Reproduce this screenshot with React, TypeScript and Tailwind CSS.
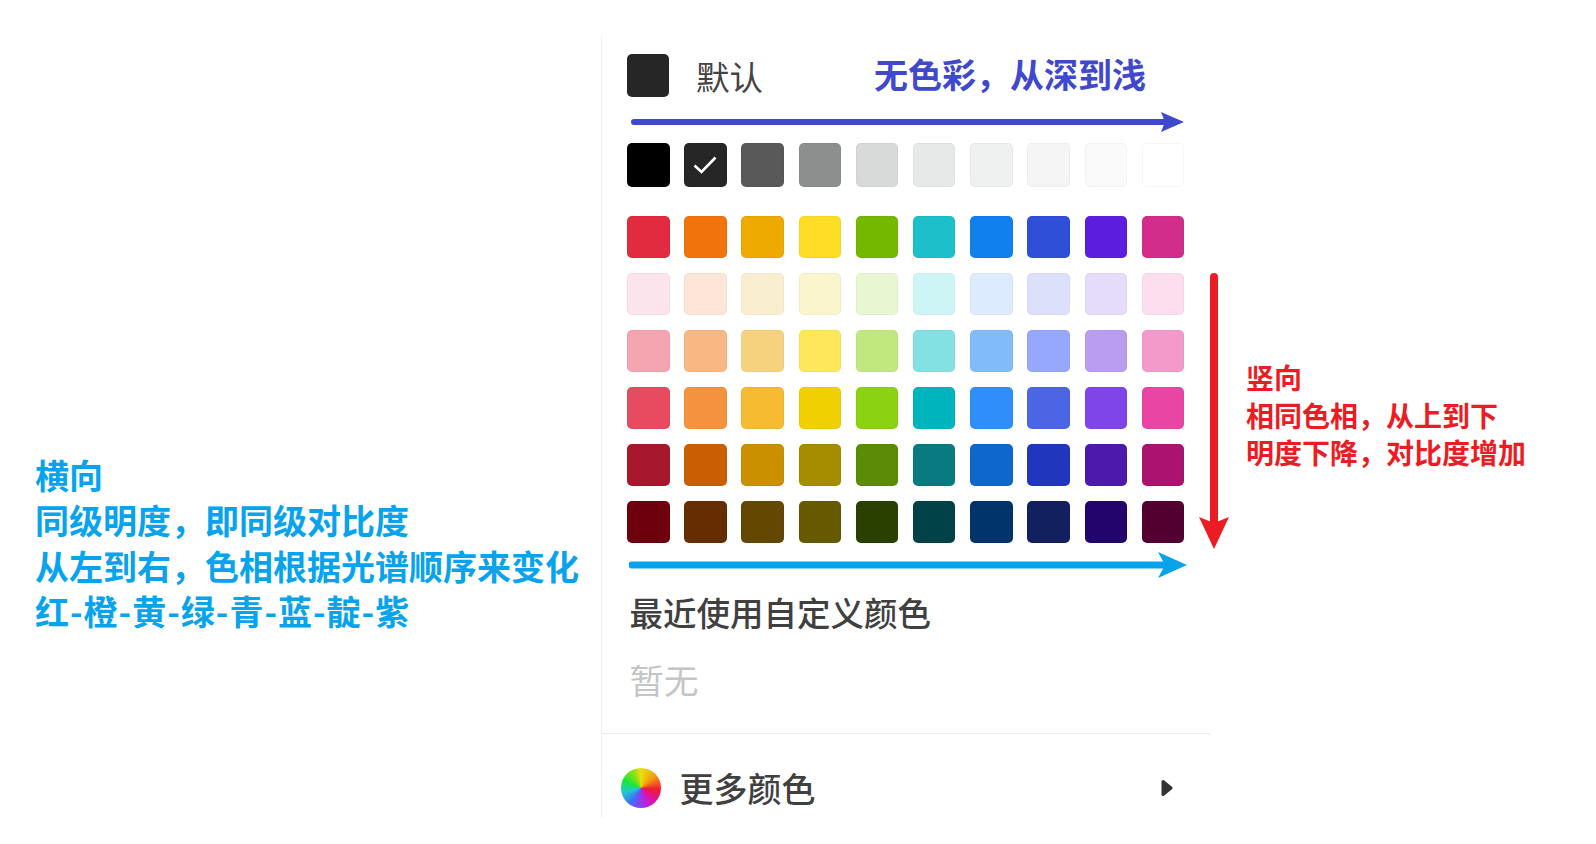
const GRAYS = ["#000000", "#262626", "#595959", "#8c8f8e", "#d8d9d9", "#e7e8e8", "#eff0f0", "#f5f5f5", "#fafafa", "#ffffff"];

const COLOR_ROWS = [
  ["#e22b3f", "#f0730c", "#efaa02", "#fedd26", "#75b800", "#1dbfcb", "#1180ef", "#2f4fd9", "#5c1ddf", "#d32d8c"],
  ["#fbe4eb", "#fde5d7", "#f9efd0", "#fbf5cd", "#e8f7d2", "#cef5f6", "#dcebfd", "#dce0fb", "#e5dcf9", "#fcdeee"],
  ["#f4a5b0", "#f9b783", "#f6d27f", "#fde75a", "#c0e87e", "#83e0e3", "#82bbfa", "#96a7fe", "#ba9cf0", "#f49acb"],
  ["#e84b60", "#f5923e", "#f5bb31", "#f0d000", "#8bd212", "#00b4bd", "#2f8ef9", "#4b65e4", "#7f45e8", "#e945a5"],
  ["#a8182c", "#c95f02", "#ca9000", "#a68d00", "#5a8c05", "#087a80", "#0e67cc", "#2037bd", "#4d18ac", "#ac1270"],
  ["#6e000e", "#642e00", "#644700", "#665a00", "#2a4000", "#004247", "#00346b", "#12205f", "#23046d", "#520032"],
];

const HUES = ["红", "橙", "黄", "绿", "青", "蓝", "靛", "紫"];

const Swatch = ({ color, checked, tall }: { color: string; checked?: boolean; tall?: boolean }) => (
  <div
    className={`flex items-center justify-center rounded-[5px] border border-black/[0.03] ${tall ? "h-[44px]" : "h-[42px]"}`}
    style={{ backgroundColor: color }}
  >
    {checked && (
      <svg width="24" height="18" viewBox="0 0 24 18" fill="none">
        <path d="M1.5 9.5 L8.5 16 L22.5 1.5" stroke="#fff" strokeWidth="2.6" />
      </svg>
    )}
  </div>
);

export default function App() {
  return (
    <div className="relative flex h-[844px] w-[1596px] overflow-hidden bg-white font-['Noto_Sans_CJK_SC',sans-serif]">
      {/* horizontal note */}
      <div className="w-[601px] pl-[35px] pt-[452px] text-[34px] font-bold leading-[45.3px] text-[#07a3ec]">
        <p>横向</p>
        <p>同级明度，即同级对比度</p>
        <p className="whitespace-nowrap">从左到右，色相根据光谱顺序来变化</p>
        <p className="whitespace-nowrap">
          {HUES.map((h, i) => (
            <span key={h}>
              {h}
              {i < HUES.length - 1 && <span className="mx-px">-</span>}
            </span>
          ))}
        </p>
      </div>

      {/* color panel */}
      <div className="mt-[37px] h-[781px] w-[609px] border-l border-[#efefef]">
        <div className="pl-[25px]">
          <div className="mt-[17px] flex h-[43px] items-center">
            <div className="h-[43px] w-[42px] rounded-[5px] bg-[#262626]" />
            <span className="ml-[27px] text-[33.5px] leading-[43px] text-[#444444]">默认</span>
            <span className="-mt-[5px] ml-[111px] whitespace-nowrap text-[34px] font-bold leading-[43px] text-[#4048cd]">
              无色彩，从深到浅
            </span>
          </div>

          <svg className="ml-[4px] mt-[15px] block" width="553" height="20" viewBox="0 0 553 20">
            <path d="M3 10 H535" stroke="#4048cd" strokeWidth="6" strokeLinecap="round" />
            <path d="M530 0 L553 10 L530 20 L534 10 Z" fill="#4048cd" />
          </svg>

          <div className="mt-[11px] grid w-[557px] grid-cols-[repeat(10,42.5px)] gap-x-[14.7px]">
            {GRAYS.map((c, i) => (
              <Swatch key={c} color={c} checked={i === 1} tall />
            ))}
          </div>

          <div className="mt-[28.7px] grid w-[557px] grid-cols-[repeat(10,42.5px)] gap-x-[14.7px] gap-y-[15px]">
            {COLOR_ROWS.flat().map((c) => (
              <Swatch key={c} color={c} />
            ))}
          </div>

          <svg className="ml-[2px] mt-[9.7px] block" width="558" height="26" viewBox="0 0 558 26">
            <path d="M3 13 H540" stroke="#07a3ec" strokeWidth="7" strokeLinecap="round" />
            <path d="M529 0 L558 13 L529 26 L536 13 Z" fill="#07a3ec" />
          </svg>

          <p className="ml-[2.5px] mt-[13.5px] text-[33.5px] font-medium leading-[40px] text-[#404040]">最近使用自定义颜色</p>
          <p className="ml-[2.5px] mt-[27.5px] text-[34.5px] leading-[40px] text-[#c4c6c6]">暂无</p>
        </div>

        <div className="mt-[33.5px] h-px bg-[#ececec]" />

        <div className="mt-[34px] flex h-[40px] items-center pl-[18.5px] pr-[37px]">
          <div className="h-10 w-10 rounded-full bg-[conic-gradient(#e8e010_0deg,#f59a10_50deg,#ee1c30_95deg,#e010b0_140deg,#a030f0_175deg,#3f70f5_215deg,#20c8d0_255deg,#18e838_295deg,#90e010_335deg,#e8e010_360deg)]" />
          <span className="ml-[19px] text-[34px] font-medium leading-[40px] text-[#404040]">更多颜色</span>
          <svg className="ml-auto" width="12" height="18" viewBox="0 0 12 18">
            <path d="M2 2.5 L10 9 L2 15.5 Z" fill="#333333" stroke="#333333" strokeWidth="3" strokeLinejoin="round" />
          </svg>
        </div>
      </div>

      {/* vertical note */}
      <div className="flex-1 pl-[36px] pt-[359px] text-[28px] font-bold leading-[37.5px] text-[#ed1c24]">
        <p>竖向</p>
        <p className="whitespace-nowrap">相同色相，从上到下</p>
        <p className="whitespace-nowrap">明度下降，对比度增加</p>
      </div>

      <svg className="absolute left-[1199px] top-[273px]" width="30" height="276" viewBox="0 0 30 276">
        <path d="M15 4 V255" stroke="#ed1c24" strokeWidth="8" strokeLinecap="round" />
        <path d="M0 244 L15 250 L30 244 L15 276 Z" fill="#ed1c24" />
      </svg>
    </div>
  );
}
